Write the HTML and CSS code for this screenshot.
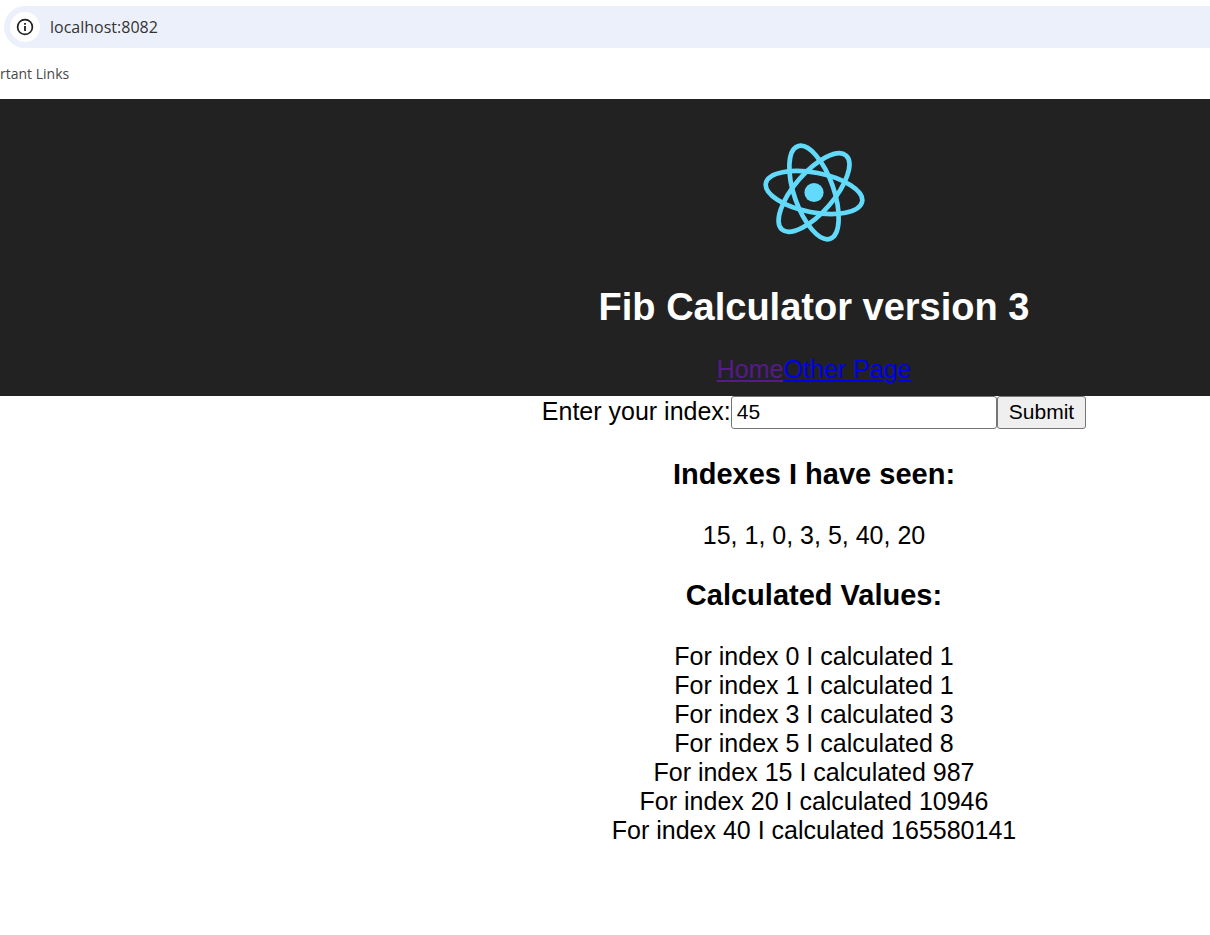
FILE: index.html
```
<!DOCTYPE html>
<html lang="en">
<head>
<meta charset="utf-8">
<title>Fib Calculator</title>
<link rel="stylesheet" href="styles.css">
</head>
<body>
<div class="browser">
  <div class="address-bar">
    <button class="site-info" type="button" aria-label="Site information">
      <svg width="18" height="18" viewBox="0 0 18 18" aria-hidden="true">
        <circle cx="9" cy="9" r="7.4" fill="none" stroke="#1f1f1f" stroke-width="1.7"/>
        <path d="M9 8v5M9 5v1.8" stroke="#1f1f1f" stroke-width="1.8"/>
      </svg>
    </button>
    <input class="address" type="text" aria-label="Address" value="localhost:8082">
  </div>
  <nav class="bookmarks"><a class="bookmark" href="#">rtant Links</a></nav>
</div>
<header class="app-header">
  <svg class="logo" viewBox="-100 -62.5 200 125" role="img" aria-label="React logo">
    <g transform="rotate(10.8)" fill="none" stroke="#61dafb" stroke-width="4.7">
      <ellipse rx="49" ry="19.8"/>
      <ellipse rx="49" ry="19.8" transform="rotate(60)"/>
      <ellipse rx="49" ry="19.8" transform="rotate(120)"/>
    </g>
    <circle r="9.6" fill="#61dafb"/>
  </svg>
  <h1 class="title">Fib Calculator version 3</h1>
  <nav><a class="visited-link" href="#">Home</a><a class="link" href="#">Other Page</a></nav>
</header>
<main class="content">
  <form class="index-form">
    <label for="index">Enter your index:</label>
    <input class="index-input" id="index" type="text" value="45">
    <button class="submit" type="button">Submit</button>
  </form>
  <h3 class="heading">Indexes I have seen:</h3>
  <div>15, 1, 0, 3, 5, 40, 20</div>
  <h3 class="heading">Calculated Values:</h3>
  <div>For index 0 I calculated 1</div>
  <div>For index 1 I calculated 1</div>
  <div>For index 3 I calculated 3</div>
  <div>For index 5 I calculated 8</div>
  <div>For index 15 I calculated 987</div>
  <div>For index 20 I calculated 10946</div>
  <div>For index 40 I calculated 165580141</div>
</main>
</body>
</html>
```
FILE: styles.css
```
* { box-sizing: border-box; }
body {
  margin: 0;
  background: #fff;
  color: #000;
  font: 25px/29px "Liberation Sans", Arial, sans-serif;
}
.browser {
  padding: 6px 0 13px;
  font-family: "Open Sans", "Noto Sans", sans-serif;
}
.address-bar {
  display: flex;
  align-items: center;
  gap: 10px;
  height: 42px;
  margin-left: 4px;
  padding-left: 6px;
  border-radius: 21px 0 0 21px;
  background: #ecf0fa;
}
.site-info {
  display: flex;
  align-items: center;
  justify-content: center;
  width: 30px;
  height: 30px;
  padding: 0;
  border: 0;
  border-radius: 50%;
  background: #fff;
}
.address {
  flex: 1;
  min-width: 0;
  padding: 0;
  border: 0;
  background: transparent;
  color: #333;
  font: 16px/24px "Open Sans", "Noto Sans", sans-serif;
}
.bookmarks {
  margin-top: 13px;
  font-size: 14px;
  line-height: 25px;
}
.bookmark {
  color: #474747;
  text-decoration: none;
}
.app-header {
  padding: 31px 0 12px 418px;
  background: #222;
  text-align: center;
}
.logo {
  display: block;
  height: 125px;
  margin: 0 auto;
}
.title {
  margin: 31px 0 26px;
  color: #fff;
  font-size: 38px;
  line-height: 43px;
}
.link { color: #0000ee; }
.visited-link { color: #551a8b; }
.content {
  padding-left: 418px;
  text-align: center;
}
.index-form {
  display: flex;
  justify-content: center;
}
.index-form label { line-height: 31px; }
.index-input, .submit {
  height: 33px;
  border: 1px solid #767676;
  border-radius: 3px;
  color: #000;
  font: 21px/24px "Liberation Sans", Arial, sans-serif;
}
.index-input {
  width: 266px;
  padding: 0 5px 2px;
  background: #fff;
}
.submit {
  padding: 0 11px 2px;
  background: #efefef;
}
.heading {
  margin: 29px 0 30px;
  font-size: 29px;
  line-height: 33px;
}
```
